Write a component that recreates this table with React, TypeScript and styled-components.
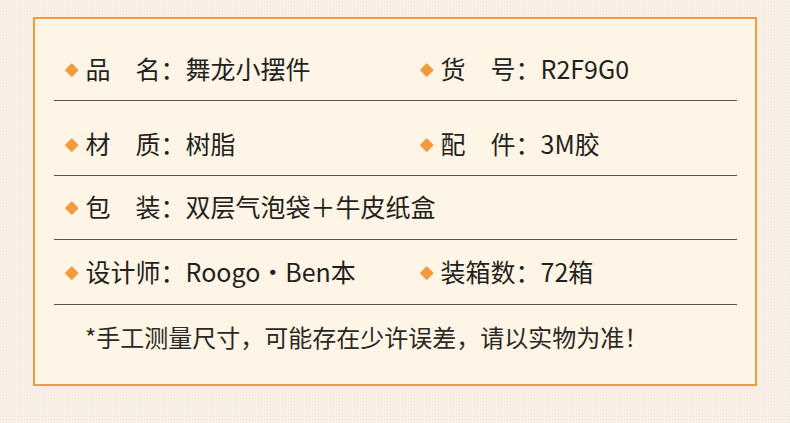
import React from 'react';
import styled, { createGlobalStyle } from 'styled-components';

const GlobalStyle = createGlobalStyle`
  html, body {
    margin: 0;
    padding: 0;
  }

  body {
    width: 790px;
    height: 423px;
    overflow: hidden;
    background-color: #f9f1e8;
    background-image:
      repeating-linear-gradient(0deg, rgba(180, 150, 120, 0.04) 0 1px, transparent 1px 3px),
      repeating-linear-gradient(90deg, rgba(180, 150, 120, 0.04) 0 1px, transparent 1px 3px);
    font-family: 'Noto Sans CJK SC', 'Noto Sans', sans-serif;
    color: #231f1c;
  }
`;

const Page = styled.div`
  padding: 17px 0 0 33px;
`;

const Card = styled.div`
  box-sizing: border-box;
  width: 724px;
  height: 369px;
  border: 2px solid #f29a3d;
  background: #fef5e6;
  padding: 0 18px 0 19px;
`;

const Row = styled.div<{ $top: number; $bottom?: number; $line?: boolean }>`
  display: grid;
  grid-template-columns: 355px 1fr;
  padding-top: ${(p) => p.$top}px;
  padding-bottom: ${(p) => p.$bottom ?? 17}px;
  border-bottom: ${(p) => (p.$line === false ? 'none' : '1px solid #575350')};
`;

const Item = styled.div`
  display: flex;
  align-items: center;
  height: 30px;
  font-size: 25px;
  line-height: 30px;
  white-space: nowrap;
`;

const Diamond = styled.span`
  width: 9.5px;
  height: 9.5px;
  margin: 3px 9px 0 13px;
  background: #f29a3d;
  border-radius: 1px;
  transform: rotate(45deg);
  flex-shrink: 0;
`;

const Note = styled.div`
  height: 30px;
  padding-left: 31px;
  font-size: 24px;
  line-height: 30px;
  color: #2b2825;
  white-space: nowrap;
`;

type Spec = { label: string; value: string };

const Field: React.FC<Spec> = ({ label, value }) => (
  <Item>
    <Diamond />
    {label}：{value}
  </Item>
);

const rows: { top: number; bottom?: number; items: Spec[] }[] = [
  {
    top: 34,
    items: [
      { label: '品　名', value: '舞龙小摆件' },
      { label: '货　号', value: 'R2F9G0' },
    ],
  },
  {
    top: 27,
    items: [
      { label: '材　质', value: '树脂' },
      { label: '配　件', value: '3M胶' },
    ],
  },
  {
    top: 15,
    bottom: 18,
    items: [{ label: '包　装', value: '双层气泡袋＋牛皮纸盒' }],
  },
  {
    top: 16,
    bottom: 18,
    items: [
      { label: '设计师', value: 'Roogo・Ben本' },
      { label: '装箱数', value: '72箱' },
    ],
  },
];

const App: React.FC = () => {
  return (
    <>
      <GlobalStyle />
      <Page>
        <Card>
          {rows.map((row, i) => (
            <Row key={i} $top={row.top} $bottom={row.bottom}>
              {row.items.map((item) => (
                <Field key={item.label} {...item} />
              ))}
            </Row>
          ))}
          <Row $top={17} $line={false}>
            <Note>*手工测量尺寸，可能存在少许误差，请以实物为准！</Note>
          </Row>
        </Card>
      </Page>
    </>
  );
};

export default App;
